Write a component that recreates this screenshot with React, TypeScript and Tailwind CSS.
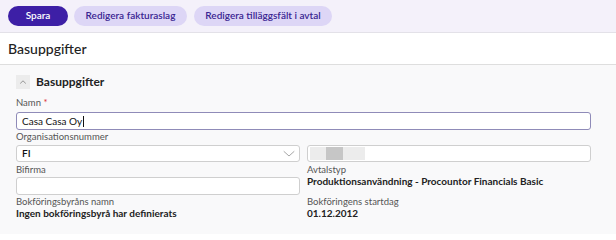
import React from "react";

function ChevronUp() {
  return (
    <svg width="8" height="8" viewBox="0 0 8 8" fill="none">
      <path d="M1.5 5.2 L4 2.8 L6.5 5.2" stroke="#8a8a8a" strokeWidth="0.9" strokeLinecap="round" strokeLinejoin="round" />
    </svg>
  );
}

function ChevronDown() {
  return (
    <svg width="12" height="8" viewBox="0 0 12 8" fill="none">
      <path d="M1 1.5 L6 6 L11 1.5" stroke="#a6a6a6" strokeWidth="1" strokeLinecap="round" strokeLinejoin="round" />
    </svg>
  );
}

export default function App() {
  return (
    <div className="w-[616px] h-[234px] overflow-hidden bg-[#f9f9fa] font-['Lato',sans-serif] text-[#222]">
      {/* toolbar */}
      <div className="h-[33px] bg-[#f4f1fa] border-b border-[#e3e1e8] flex items-center gap-[6px] pl-[8px] pb-[1px]">
        <button className="h-[20px] w-[60px] rounded-full bg-[#3d1fa6] text-white text-[10px] font-semibold flex items-center justify-center">
          Spara
        </button>
        <button className="h-[20px] w-[113px] rounded-full bg-[#ddd6f6] text-[#3a2592] text-[10px] font-semibold flex items-center justify-center">
          Redigera fakturaslag
        </button>
        <button className="h-[20px] w-[138px] rounded-full bg-[#ddd6f6] text-[#3a2592] text-[10px] font-semibold flex items-center justify-center ml-[1px]">
          Redigera tilläggsfält i avtal
        </button>
      </div>
      {/* page header */}
      <div className="h-[32px] bg-white border-b border-[#dedede] flex items-center pl-[8px] text-[14px] font-medium text-[#222]">
        Basuppgifter
      </div>
      {/* section */}
      <div className="pl-[16px] pr-[25px] pt-[10px]">
        <div className="flex items-center h-[14px] gap-[6px]">
          <div className="w-[14px] h-[14px] bg-[#ececec] flex items-center justify-center">
            <ChevronUp />
          </div>
          <div className="text-[12px] font-bold text-[#222]">Basuppgifter</div>
        </div>

        <div className="mt-[8px] h-[12px] leading-[12px] text-[9.5px] text-[#555]">
          Namn<span className="text-[#d33]"> *</span>
        </div>
        <div className="mt-[3px] h-[18px] rounded-[3px] border border-[#8f8bb8] bg-white flex items-center pl-[5px] text-[10px] text-[#111]">
          Casa Casa Oy<span className="w-[1px] h-[11px] bg-[#111] ml-[1px]" />
        </div>

        <div className="mt-[1px] h-[12px] leading-[12px] text-[9.5px] text-[#555]">Organisationsnummer</div>
        <div className="mt-[2px] grid grid-cols-2 gap-[7px]">
          <div className="h-[17px] rounded-[3px] border border-[#cfcfcf] bg-white flex items-center justify-between pl-[5px] pr-[4px] text-[10px] font-semibold text-[#111]">
            FI
            <ChevronDown />
          </div>
          <div className="h-[17px] rounded-[3px] border border-[#cfcfcf] bg-white flex items-center pl-[2px]">
            <div className="w-[55px] h-[13px] bg-[#ececec] flex">
              <div className="ml-[16px] w-[17px] h-[13px] bg-[#c6c6c6]" />
            </div>
          </div>
        </div>

        <div className="mt-[2px] grid grid-cols-2 gap-[7px]">
          <div>
            <div className="h-[12px] leading-[12px] text-[9.5px] text-[#555]">Bifirma</div>
            <div className="mt-[1px] h-[18px] rounded-[3px] border border-[#cfcfcf] bg-white" />
          </div>
          <div>
            <div className="h-[12px] leading-[12px] text-[9.5px] text-[#555]">Avtalstyp</div>
            <div className="h-[11px] leading-[11px] text-[10px] font-bold text-[#222]">
              Produktionsanvändning - Procountor Financials Basic
            </div>
          </div>
        </div>

        <div className="mt-[1px] grid grid-cols-2 gap-[7px]">
          <div>
            <div className="h-[12px] leading-[12px] text-[9.5px] text-[#555]">Bokföringsbyråns namn</div>
            <div className="h-[11px] leading-[11px] text-[10px] font-bold text-[#222]">
              Ingen bokföringsbyrå har definierats
            </div>
          </div>
          <div>
            <div className="h-[12px] leading-[12px] text-[9.5px] text-[#555]">Bokföringens startdag</div>
            <div className="h-[11px] leading-[11px] text-[10px] font-bold text-[#222]">01.12.2012</div>
          </div>
        </div>
      </div>
    </div>
  );
}
